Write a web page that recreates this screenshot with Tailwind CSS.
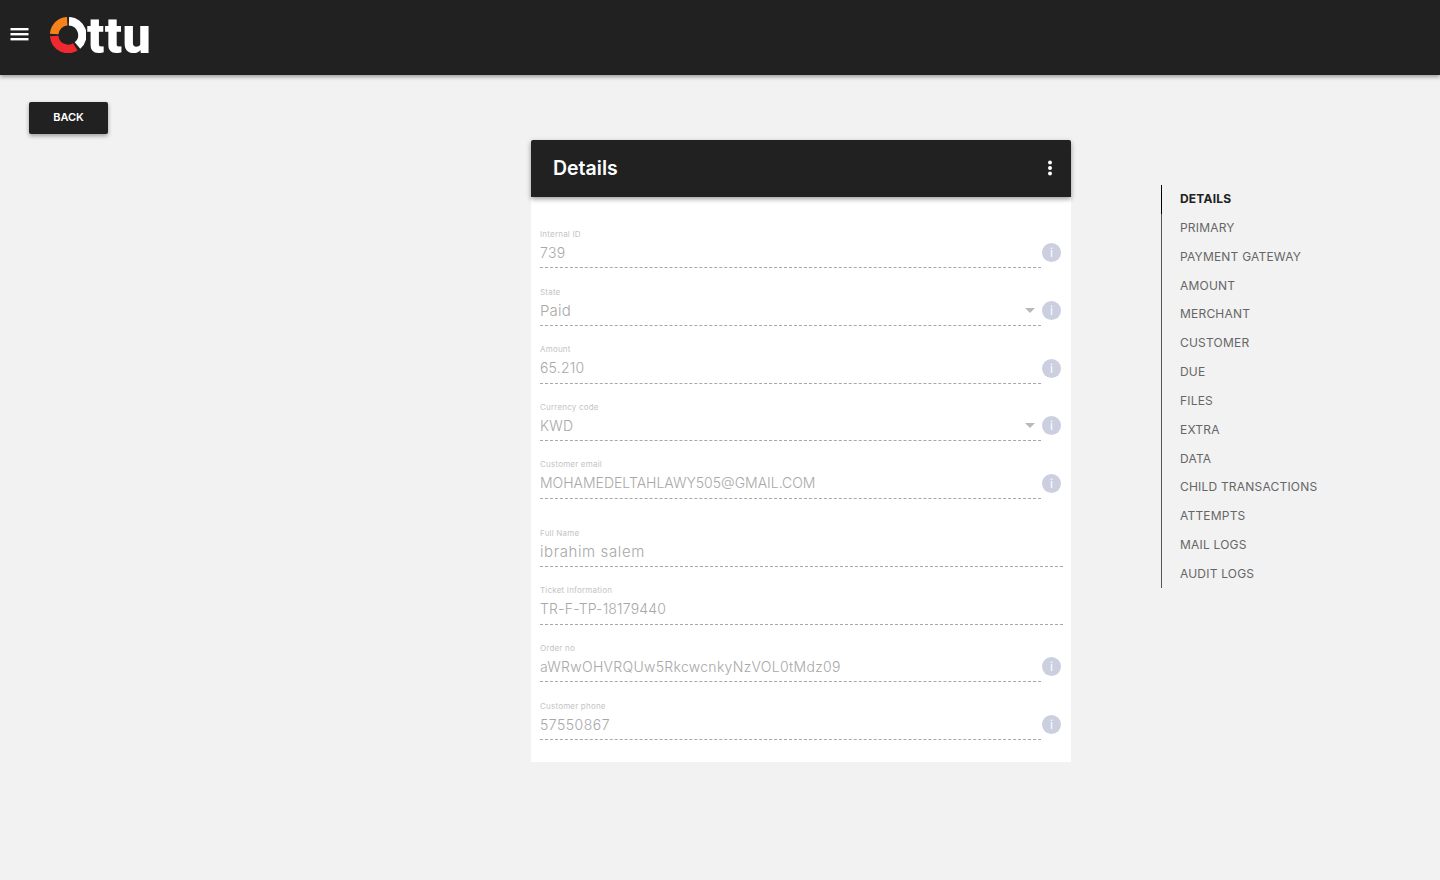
<!DOCTYPE html>
<html lang="en">

<head>
    <meta charset="UTF-8">
    <meta name="viewport" content="width=device-width, initial-scale=1.0">
    <title>Transaction Details</title>
    <script src="https://cdn.jsdelivr.net/npm/@tailwindcss/browser@4"></script>
</head>

<body class="bg-[#f2f2f2] h-[880px] overflow-hidden font-['Inter',sans-serif]">
    <!-- Top bar -->
    <header class="h-[75px] bg-[#212121] flex items-center shadow-[0_2px_4px_rgba(0,0,0,0.35)] relative">
        <svg class="ml-[10px] w-[19px] h-[14px] mb-[8px]" viewBox="0 0 19 14" fill="#fff">
            <rect x="0.5" y="1" width="18" height="2.4"></rect>
            <rect x="0.5" y="6" width="18" height="2.4"></rect>
            <rect x="0.5" y="11" width="18" height="2.4"></rect>
        </svg>
        <svg class="ml-[21px] w-[36px] h-[36px] mb-[6px]" viewBox="0 0 36 36" fill="none" stroke-width="8.5">
            <path d="M17.2 4.2 A13.8 13.8 0 0 0 4.2 17" stroke="#f7821b"></path>
            <path d="M4.2 19 A13.8 13.8 0 0 0 25.3 29.8" stroke="#ee2a2e"></path>
            <path d="M19 4.2 A13.8 13.8 0 0 1 27.5 28.5" stroke="#fff"></path>
        </svg>
        <span class="ml-[1px] text-white text-[50px] leading-none font-black font-['Roboto',sans-serif] tracking-[0.6px] mb-[4px]">ttu</span>
    </header>

    <div class="pl-[29px] pt-[27px]">
        <button class="w-[79px] h-[32px] pb-[1px] bg-[#212121] rounded-[2px] text-white text-[11px] font-semibold shadow-[0_2px_4px_rgba(0,0,0,0.35)]">BACK</button>
    </div>

    <div class="flex items-start pl-[531px] mt-[6px]">
        <!-- Details card -->
        <section class="w-[540px] h-[622px] bg-white">
            <div class="h-[57px] bg-[#212121] flex items-center justify-between pl-[22px] pr-[17px] rounded-t-[2px] shadow-[0_2px_5px_rgba(0,0,0,0.4)]">
                <h2 class="text-white text-[19.5px] font-semibold pt-[1px]">Details</h2>
                <svg class="w-[8px] h-[16px] mb-[2px]" viewBox="0 0 8 16" fill="#fff">
                    <circle cx="4" cy="2.5" r="2"></circle>
                    <circle cx="4" cy="8" r="2"></circle>
                    <circle cx="4" cy="13.5" r="2"></circle>
                </svg>
            </div>
            <div class="pl-[9px] pr-[10px] pt-[31px]">
                <div class="h-[58px]">
                    <p class="text-[8px] leading-[12px] text-[#c4c4c4] tracking-[0.2px]">Internal ID</p>
                    <div class="flex">
                        <div class="flex-1 h-[28px] pb-[3px] flex items-center justify-between border-b border-dashed border-[#a8a8a8] text-[14px] font-light text-[#a8a8a8] tracking-[0.3px]">739</div>
                        <span class="ml-[1px] mt-[3px] w-[19px] h-[19px] rounded-full bg-[#cbcfdf] text-white text-[12px] flex items-center justify-center">i</span>
                    </div>
                </div>
                <div class="h-[57px]">
                    <p class="text-[8px] leading-[12px] text-[#c4c4c4] tracking-[0.2px]">State</p>
                    <div class="flex">
                        <div class="flex-1 h-[28px] pb-[1px] flex items-center justify-between border-b border-dashed border-[#a8a8a8] text-[15px] font-light text-[#a8a8a8] tracking-[0.2px]">Paid
                            <span class="w-0 h-0 mr-[6px] mb-[1px] border-x-[5px] border-x-transparent border-t-[5px] border-t-[#b9b9b9]"></span>
                        </div>
                        <span class="ml-[1px] mt-[3px] w-[19px] h-[19px] rounded-full bg-[#cbcfdf] text-white text-[12px] flex items-center justify-center">i</span>
                    </div>
                </div>
                <div class="h-[58px]">
                    <p class="text-[8px] leading-[12px] text-[#c4c4c4] tracking-[0.2px]">Amount</p>
                    <div class="flex">
                        <div class="flex-1 h-[29px] pb-[4px] flex items-center justify-between border-b border-dashed border-[#a8a8a8] text-[14px] font-light text-[#a8a8a8] tracking-[0.2px]">65.210</div>
                        <span class="ml-[1px] mt-[4px] w-[19px] h-[19px] rounded-full bg-[#cbcfdf] text-white text-[12px] flex items-center justify-center">i</span>
                    </div>
                </div>
                <div class="h-[57px]">
                    <p class="text-[8px] leading-[12px] text-[#c4c4c4] tracking-[0.2px]">Currency code</p>
                    <div class="flex">
                        <div class="flex-1 h-[28px] pb-[3px] flex items-center justify-between border-b border-dashed border-[#a8a8a8] text-[14px] font-light text-[#a8a8a8] tracking-[0.2px]">KWD
                            <span class="w-0 h-0 mr-[6px] border-x-[5px] border-x-transparent border-t-[5px] border-t-[#b9b9b9]"></span>
                        </div>
                        <span class="ml-[1px] mt-[3px] w-[19px] h-[19px] rounded-full bg-[#cbcfdf] text-white text-[12px] flex items-center justify-center">i</span>
                    </div>
                </div>
                <div class="h-[69px]">
                    <p class="text-[8px] leading-[12px] text-[#c4c4c4] tracking-[0.2px]">Customer email</p>
                    <div class="flex">
                        <div class="flex-1 h-[29px] pb-[4px] flex items-center justify-between border-b border-dashed border-[#a8a8a8] text-[14px] font-light text-[#a8a8a8]">MOHAMEDELTAHLAWY505@GMAIL.COM</div>
                        <span class="ml-[1px] mt-[4px] w-[19px] h-[19px] rounded-full bg-[#cbcfdf] text-white text-[12px] flex items-center justify-center">i</span>
                    </div>
                </div>
                <div class="h-[57px]">
                    <p class="text-[8px] leading-[12px] text-[#c4c4c4] tracking-[0.2px]">Full Name</p>
                    <div class="h-[28px] pb-[1px] mr-[-2px] flex items-center border-b border-dashed border-[#a8a8a8] text-[15px] font-light text-[#a8a8a8] tracking-[0.6px]">ibrahim salem</div>
                </div>
                <div class="h-[58px]">
                    <p class="text-[8px] leading-[12px] text-[#c4c4c4] tracking-[0.2px]">Ticket Information</p>
                    <div class="h-[29px] pb-[4px] mr-[-2px] flex items-center border-b border-dashed border-[#a8a8a8] text-[14px] font-light text-[#a8a8a8] tracking-[0.2px]">TR-F-TP-18179440</div>
                </div>
                <div class="h-[58px]">
                    <p class="text-[8px] leading-[12px] text-[#c4c4c4] tracking-[0.2px]">Order no</p>
                    <div class="flex">
                        <div class="flex-1 h-[28px] pb-[3px] flex items-center justify-between border-b border-dashed border-[#a8a8a8] text-[14px] font-light text-[#a8a8a8] tracking-[0.3px]">aWRwOHVRQUw5RkcwcnkyNzVOL0tMdz09</div>
                        <span class="ml-[1px] mt-[3px] w-[19px] h-[19px] rounded-full bg-[#cbcfdf] text-white text-[12px] flex items-center justify-center">i</span>
                    </div>
                </div>
                <div class="h-[58px]">
                    <p class="text-[8px] leading-[12px] text-[#c4c4c4] tracking-[0.2px]">Customer phone</p>
                    <div class="flex">
                        <div class="flex-1 h-[28px] pb-[3px] flex items-center justify-between border-b border-dashed border-[#a8a8a8] text-[14px] font-light text-[#a8a8a8] tracking-[0.5px]">57550867</div>
                        <span class="ml-[1px] mt-[3px] w-[19px] h-[19px] rounded-full bg-[#cbcfdf] text-white text-[12px] flex items-center justify-center">i</span>
                    </div>
                </div>
            </div>
        </section>

        <!-- Section nav -->
        <nav class="ml-[90px] mt-[45px] w-[190px] h-[403px] border-l border-[#555] relative text-[12px] leading-[28.85px] text-[#666] tracking-[0.2px] pl-[18px]">
            <span class="absolute left-[-1px] top-0 w-[1px] h-[29px] bg-black"></span>
            <a class="block font-bold text-[#212121]">DETAILS</a>
            <a class="block">PRIMARY</a>
            <a class="block">PAYMENT GATEWAY</a>
            <a class="block">AMOUNT</a>
            <a class="block">MERCHANT</a>
            <a class="block">CUSTOMER</a>
            <a class="block">DUE</a>
            <a class="block">FILES</a>
            <a class="block">EXTRA</a>
            <a class="block">DATA</a>
            <a class="block">CHILD TRANSACTIONS</a>
            <a class="block">ATTEMPTS</a>
            <a class="block">MAIL LOGS</a>
            <a class="block">AUDIT LOGS</a>
        </nav>
    </div>
</body>

</html>
